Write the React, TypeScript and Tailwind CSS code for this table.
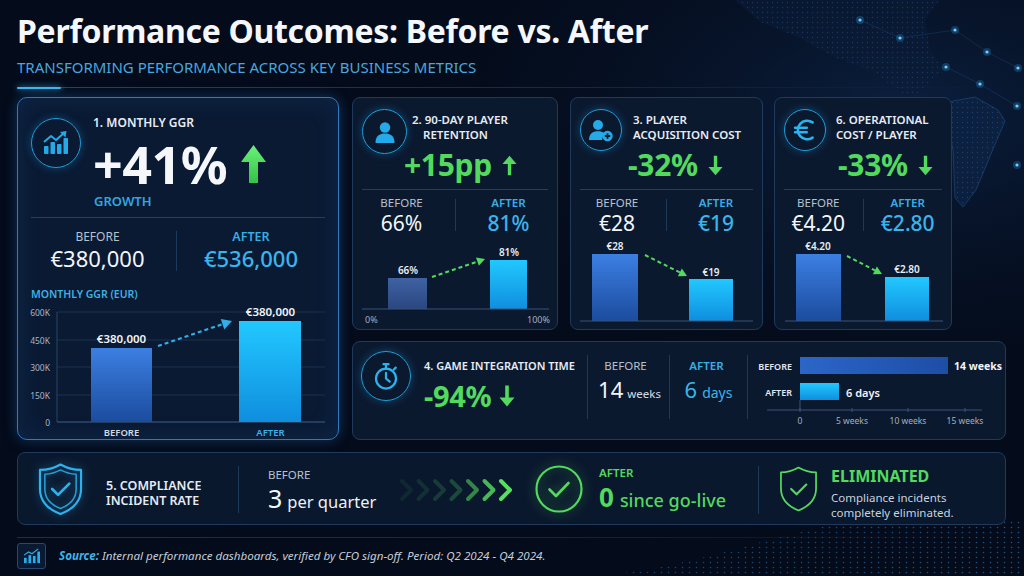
import React from 'react'

const GREEN = '#52d95e'

const NODES: [number, number][] = [
  [955, 30],
  [987, 52],
  [946, 67],
  [980, 84],
  [1018, 68],
  [1017, 106],
  [1017, 165],
  [900, 38],
  [860, 20],
]

function Backdrop() {
  return (
    <svg className="absolute inset-0" width="1024" height="576" viewBox="0 0 1024 576">
      <defs>
        <radialGradient id="bgGlow" cx="0.88" cy="0.2" r="0.55">
          <stop offset="0" stopColor="#0d2548" stopOpacity="0.8" />
          <stop offset="1" stopColor="#040b1a" stopOpacity="0" />
        </radialGradient>
        <pattern id="mapDots" width="5" height="5" patternUnits="userSpaceOnUse">
          <circle cx="2.5" cy="2.5" r="0.7" fill="#3a78c0" />
        </pattern>
        <pattern id="waveDots" width="7" height="5" patternUnits="userSpaceOnUse">
          <circle cx="3.5" cy="2.5" r="0.8" fill="#2f82c8" />
        </pattern>
        <linearGradient id="waveFade" x1="0" y1="0" x2="1" y2="0">
          <stop offset="0" stopColor="#fff" stopOpacity="0" />
          <stop offset="0.5" stopColor="#fff" stopOpacity="0.6" />
          <stop offset="1" stopColor="#fff" stopOpacity="0.9" />
        </linearGradient>
        <mask id="waveMask">
          <rect x="0" y="0" width="1024" height="576" fill="url(#waveFade)" />
        </mask>
      </defs>
      <rect width="1024" height="576" fill="url(#bgGlow)" />
      <path d="M735 0 L760 22 L800 38 L835 58 L870 70 L892 86 L906 96 L922 92 L934 80 L945 70 L930 50 L925 20 L940 0 Z" fill="#0b1d38" opacity="0.6" />
      <path d="M735 0 L760 22 L800 38 L835 58 L870 70 L892 86 L906 96 L922 92 L934 80 L945 70 L930 50 L925 20 L940 0 Z" fill="url(#mapDots)" opacity="0.3" />
      <path d="M948 102 L975 97 L998 110 L1005 121 L996 142 L986 166 L976 190 L963 207 L955 198 L953 150 L947 122 Z" fill="#0d2244" opacity="0.8" stroke="#2a5d96" strokeWidth="0.6" />
      <path d="M948 102 L975 97 L998 110 L1005 121 L996 142 L986 166 L976 190 L963 207 L955 198 L953 150 L947 122 Z" fill="url(#mapDots)" opacity="0.35" />
      <g stroke="#1f4d80" strokeWidth="0.6" opacity="0.6">
        <line x1="955" y1="30" x2="987" y2="52" />
        <line x1="987" y1="52" x2="1018" y2="68" />
        <line x1="946" y1="67" x2="980" y2="84" />
        <line x1="980" y1="84" x2="1017" y2="106" />
        <line x1="900" y1="38" x2="955" y2="30" />
        <line x1="860" y1="20" x2="900" y2="38" />
      </g>
      {NODES.map(([x, y]) => (
        <g key={`${x}-${y}`}>
          <circle cx={x} cy={y} r="4" fill="#2fa8f0" opacity="0.25" />
          <circle cx={x} cy={y} r="1.6" fill="#6fd0ff" />
        </g>
      ))}
      <g mask="url(#waveMask)">
        <path d="M600 576 C700 566 770 534 850 522 C930 510 980 536 1024 516 L1024 576 Z" fill="url(#waveDots)" opacity="0.7" />
      </g>
    </svg>
  )
}

function ThickArrow({ className }: { className?: string }) {
  return (
    <svg viewBox="0 0 25 38" className={className}>
      <defs>
        <linearGradient id="thickG" x1="0" y1="0" x2="0" y2="1">
          <stop offset="0" stopColor="#6af276" />
          <stop offset="1" stopColor="#34c24a" />
        </linearGradient>
      </defs>
      <path d="M12.5 0 L25 17 L17 17 L17 38 L8 38 L8 17 L0 17 Z" fill="url(#thickG)" />
    </svg>
  )
}

function ThinArrow({ dir, className }: { dir: 'up' | 'down'; className?: string }) {
  return (
    <svg viewBox="0 0 16 22" className={className} fill={GREEN}>
      {dir === 'up' ? (
        <path d="M8 0.5 L15.5 9.5 L9.8 9.5 L9.8 21.5 L6.2 21.5 L6.2 9.5 L0.5 9.5 Z" />
      ) : (
        <path d="M8 21.5 L15.5 12.5 L9.8 12.5 L9.8 0.5 L6.2 0.5 L6.2 12.5 L0.5 12.5 Z" />
      )}
    </svg>
  )
}

function DashArrow({ x1, y1, x2, y2, color, w = 2, head = 8 }: { x1: number; y1: number; x2: number; y2: number; color: string; w?: number; head?: number }) {
  const a = Math.atan2(y2 - y1, x2 - x1)
  const bx = x2 - Math.cos(a) * head
  const by = y2 - Math.sin(a) * head
  const hw = head * 0.55
  const px = -Math.sin(a) * hw
  const py = Math.cos(a) * hw
  return (
    <g>
      <line x1={x1} y1={y1} x2={bx} y2={by} stroke={color} strokeWidth={w} strokeDasharray="4 3" />
      <polygon points={`${x2},${y2} ${bx + px},${by + py} ${bx - px},${by - py}`} fill={color} />
    </g>
  )
}

function BarDefs() {
  return (
    <defs>
      <linearGradient id="barBefore" x1="0" y1="0" x2="0" y2="1">
        <stop offset="0" stopColor="#3c7fe2" />
        <stop offset="1" stopColor="#1b4c9e" />
      </linearGradient>
      <linearGradient id="barBeforeMuted" x1="0" y1="0" x2="0" y2="1">
        <stop offset="0" stopColor="#3f62a3" />
        <stop offset="1" stopColor="#2a4680" />
      </linearGradient>
      <linearGradient id="barAfter" x1="0" y1="0" x2="0" y2="1">
        <stop offset="0" stopColor="#22c8ff" />
        <stop offset="1" stopColor="#0f8ede" />
      </linearGradient>
      <linearGradient id="barBeforeH" x1="0" y1="0" x2="1" y2="0">
        <stop offset="0" stopColor="#2b66c8" />
        <stop offset="1" stopColor="#1d4ea6" />
      </linearGradient>
    </defs>
  )
}

function IconCircle({ className, children }: { className: string; children: React.ReactNode }) {
  return (
    <div className={`flex shrink-0 items-center justify-center rounded-full border-[1.5px] border-[#1f9dd8] shadow-[0_0_8px_rgba(30,160,230,0.35)] ${className}`}>
      {children}
    </div>
  )
}

function GrowthIcon() {
  return (
    <svg viewBox="0 0 28 24" className="h-[24px] w-[28px]" fill="#24aae8">
      <rect x="2" y="15" width="4.5" height="8" rx="0.8" />
      <rect x="8.5" y="11" width="4.5" height="12" rx="0.8" />
      <rect x="15" y="13" width="4.5" height="10" rx="0.8" />
      <rect x="21.5" y="7" width="4.5" height="16" rx="0.8" />
      <path d="M2 11 L9 5 L14 9 L22 2" fill="none" stroke="#24aae8" strokeWidth="2" strokeLinejoin="round" />
      <path d="M18 1 L24.5 0 L23.5 6.5 Z" />
    </svg>
  )
}

function UserIcon() {
  return (
    <svg viewBox="0 0 24 24" className="h-[24px] w-[24px]" fill="#24aae8">
      <circle cx="12" cy="7.5" r="5.2" />
      <path d="M2.5 23 C2.5 16 6.5 13.6 12 13.6 C17.5 13.6 21.5 16 21.5 23 Z" />
    </svg>
  )
}

function UserPlusIcon() {
  return (
    <svg viewBox="0 0 26 24" className="h-[24px] w-[26px]" fill="#24aae8">
      <circle cx="10" cy="7" r="5" />
      <path d="M1 22 C1 15.5 4.8 13.2 10 13.2 C12.5 13.2 14.5 13.7 16 14.8 L14 22 Z" />
      <circle cx="19.5" cy="18" r="5.2" />
      <path d="M19.5 15.3 V20.7 M16.8 18 H22.2" stroke="#0b192f" strokeWidth="1.8" />
    </svg>
  )
}

function EuroIcon() {
  return (
    <svg viewBox="0 0 24 24" className="h-[28px] w-[28px]" fill="none" stroke="#29b4ef" strokeWidth="2.2" strokeLinecap="round">
      <path d="M18.5 5.5 A8 8 0 1 0 18.5 18.5" />
      <path d="M3.5 10 H13.5 M3.5 14 H13.5" />
    </svg>
  )
}

function TimerIcon() {
  return (
    <svg viewBox="0 0 24 24" className="h-[30px] w-[30px]" fill="none" stroke="#29b4ef" strokeWidth="1.8" strokeLinecap="round">
      <circle cx="12" cy="14" r="8" />
      <path d="M10 2.5 H14 M12 2.5 V6" />
      <path d="M18.3 6.8 L19.8 5.3" />
      <path d="M12 9.5 V14 L15 16.5" />
    </svg>
  )
}

function ShieldDouble() {
  return (
    <svg viewBox="0 0 46 54" className="h-[54px] w-[45px]" fill="none" stroke="#2eb2ee" strokeLinejoin="round">
      <path d="M23 2 C30 6 37 7.5 44 7.5 V27 C44 40 35 48 23 52.5 C11 48 2 40 2 27 V7.5 C9 7.5 16 6 23 2 Z" strokeWidth="2.2" />
      <path d="M23 7.5 C28.5 10.5 34 11.8 39 12 V27 C39 37 32 43.5 23 47 C14 43.5 7 37 7 27 V12 C12 11.8 17.5 10.5 23 7.5 Z" strokeWidth="1.6" opacity="0.85" />
      <path d="M14.5 27 L20.5 33 L32 21.5" strokeWidth="2.8" strokeLinecap="round" />
    </svg>
  )
}

function ShieldGreen() {
  return (
    <svg viewBox="0 0 40 47" className="h-[46px] w-[39px]" fill="none" stroke={GREEN} strokeLinejoin="round">
      <path d="M20 1.5 C26 5 32 6.5 38 6.5 V23 C38 34 30 41.5 20 45.5 C10 41.5 2 34 2 23 V6.5 C8 6.5 14 5 20 1.5 Z" strokeWidth="1.8" />
      <path d="M12.5 23.5 L18 29 L28 19" strokeWidth="2.2" strokeLinecap="round" />
    </svg>
  )
}

function CheckCircle() {
  return (
    <svg viewBox="0 0 48 48" className="h-[48px] w-[48px] drop-shadow-[0_0_6px_rgba(80,220,90,0.55)]" fill="none" stroke={GREEN}>
      <circle cx="24" cy="24" r="22.5" strokeWidth="2.2" />
      <path d="M14.5 24.5 L21 31 L33.5 18" strokeWidth="2.6" strokeLinecap="round" strokeLinejoin="round" />
    </svg>
  )
}

function Chevrons() {
  const ops = [0.12, 0.18, 0.26, 0.36, 0.55, 0.8, 1]
  return (
    <svg viewBox="0 0 117 24" className="h-[24px] w-[117px]" fill="none" strokeWidth="4" strokeLinecap="round" strokeLinejoin="round">
      {ops.map((o, i) => (
        <path key={i} d={`M${4 + i * 16.5} 3 L${13 + i * 16.5} 12 L${4 + i * 16.5} 21`} stroke={i > 3 ? '#57e05f' : '#3aa25a'} opacity={o} />
      ))}
    </svg>
  )
}

function StatsIcon() {
  return (
    <svg viewBox="0 0 20 18" className="h-[16px] w-[18px]" fill="#27aee9">
      <rect x="1" y="11" width="3" height="6" />
      <rect x="6" y="8" width="3" height="9" />
      <rect x="11" y="9" width="3" height="8" />
      <rect x="16" y="4" width="3" height="13" />
      <path d="M1 8 L6 4.5 L10 6.5 L17 1" fill="none" stroke="#27aee9" strokeWidth="1.3" />
    </svg>
  )
}

function GgrCard() {
  return (
    <div className="flex h-[343px] w-[322px] shrink-0 flex-col rounded-[10px] border border-[#2d7ac2] bg-[#0a1a33] px-[13px] shadow-[0_0_14px_rgba(40,130,220,0.35),inset_0_0_24px_rgba(40,120,210,0.14)]">
      <div className="flex">
        <IconCircle className="mt-[20px] h-[50px] w-[50px]">
          <GrowthIcon />
        </IconCircle>
        <div className="ml-[12px] flex flex-col pt-[17px]">
          <div className="text-[12px] font-semibold leading-[16px] text-[#e6ecf4]">1. MONTHLY GGR</div>
          <div className="mt-[7px] flex items-center">
            <span className="text-[52px] font-bold leading-[52px] tracking-[-0.5px] text-[#f5f7fa]">+41%</span>
            <ThickArrow className="ml-[14px] h-[38px] w-[25px]" />
          </div>
          <div className="ml-[1px] mt-[3px] text-[13px] font-semibold leading-[16px] text-[#2ea8e0]">GROWTH</div>
        </div>
      </div>
      <div className="mt-[8px] h-px bg-[#22405f]" />
      <div className="mt-[11px] flex items-start">
        <div className="flex w-[145px] flex-col items-center pr-[12px]">
          <div className="text-[12px] leading-[16px] text-[#b6c1ce]">BEFORE</div>
          <div className="text-[22px] leading-[26px] text-[#f3f6fa]">€380,000</div>
        </div>
        <div className="mt-[2px] h-[40px] w-px bg-[#1e3a5a]" />
        <div className="flex flex-1 flex-col items-center">
          <div className="text-[12.5px] font-semibold leading-[16px] text-[#37aee6]">AFTER</div>
          <div className="text-[22px] font-medium leading-[26px] text-[#3ab4ec]">€536,000</div>
        </div>
      </div>
      <div className="mt-[16px] text-[10.5px] font-semibold leading-[14px] text-[#3fb0e2]">MONTHLY GGR (EUR)</div>
      <svg className="mt-[3px] overflow-visible" width="294" height="135" viewBox="0 0 294 135">
        <BarDefs />
        {[
          [8, '600K'],
          [36, '450K'],
          [63, '300K'],
          [91, '150K'],
          [118, '0'],
        ].map(([y, l]) => (
          <g key={l as string}>
            <line x1="26" y1={y as number} x2="294" y2={y as number} stroke="#1a3150" strokeWidth="1" />
            <text x="19" y={y as number} textAnchor="end" dominantBaseline="central" fontSize="8.5" fill="#a9b5c4">
              {l}
            </text>
          </g>
        ))}
        <line x1="26" y1="8" x2="26" y2="118" stroke="#2a4566" strokeWidth="1" />
        <line x1="26" y1="118" x2="294" y2="118" stroke="#3a5578" strokeWidth="1.2" />
        <rect x="60" y="44" width="61" height="74" fill="url(#barBefore)" />
        <rect x="208" y="17" width="62" height="101" fill="url(#barAfter)" />
        <text x="90.5" y="34" textAnchor="middle" dominantBaseline="central" fontSize="11.5" fontWeight="600" fill="#f1f4f8">
          €380,000
        </text>
        <text x="239.5" y="7" textAnchor="middle" dominantBaseline="central" fontSize="11.5" fontWeight="600" fill="#f1f4f8">
          €380,000
        </text>
        <DashArrow x1={127} y1={42} x2={201} y2={17} color="#31aee8" w={2.2} head={10} />
        <text x="90.5" y="128" textAnchor="middle" dominantBaseline="central" fontSize="9.5" fontWeight="600" fill="#d3dae4">
          BEFORE
        </text>
        <text x="239.5" y="128" textAnchor="middle" dominantBaseline="central" fontSize="9.5" fontWeight="600" fill="#38b2ec">
          AFTER
        </text>
      </svg>
    </div>
  )
}

type SmallCardProps = {
  box: string
  iconBox: string
  icon: React.ReactNode
  titleBox: string
  title1: string
  title2: string
  title2Box?: string
  value: string
  valueBox: string
  dir: 'up' | 'down'
  before: string
  after: string
  colPad: [string, string]
  chart: React.ReactNode
}

function SmallCard(p: SmallCardProps) {
  return (
    <div className={`flex h-[233px] shrink-0 flex-col rounded-[8px] border border-[#1f3a5b] bg-[#0b192f] ${p.box}`}>
      <div className="flex items-start pl-[9px]">
        <IconCircle className={`mt-[11px] ${p.iconBox}`}>{p.icon}</IconCircle>
        <div className={`flex flex-col pt-[14px] ${p.titleBox}`}>
          <div className="whitespace-nowrap text-[11.5px] font-semibold leading-[15px] text-[#e6ecf4]">{p.title1}</div>
          <div className={`whitespace-nowrap text-[11.5px] font-semibold leading-[15px] text-[#e6ecf4] ${p.title2Box ?? ''}`}>{p.title2}</div>
          <div className={`mt-[6px] flex items-center ${p.valueBox}`}>
            <span className="text-[30px] font-bold leading-[34px] tracking-[-0.3px] text-[#52d95e]">{p.value}</span>
            <ThinArrow dir={p.dir} className="ml-[10px] h-[21px] w-[15px]" />
          </div>
        </div>
      </div>
      <div className="mx-[9px] mt-[7px] h-px bg-[#22405f]" />
      <div className="mx-[9px] mt-[6px] flex items-start">
        <div className={`flex flex-1 flex-col items-center ${p.colPad[0]}`}>
          <div className="text-[11.5px] leading-[14px] text-[#b6c1ce]">BEFORE</div>
          <div className="text-[21px] leading-[26px] text-[#f3f6fa]">{p.before}</div>
        </div>
        <div className="mt-[3px] h-[32px] w-px bg-[#1e3a5a]" />
        <div className={`flex flex-1 flex-col items-center ${p.colPad[1]}`}>
          <div className="text-[11.5px] font-semibold leading-[14px] text-[#37aee6]">AFTER</div>
          <div className="text-[21px] font-medium leading-[26px] text-[#3ab4ec]">{p.after}</div>
        </div>
      </div>
      {p.chart}
    </div>
  )
}

function BarLabel({ x, y, t }: { x: number; y: number; t: string }) {
  return (
    <text x={x} y={y} textAnchor="middle" dominantBaseline="central" fontSize="10" fontWeight="600" fill="#e8edf3">
      {t}
    </text>
  )
}

function IntegrationCard() {
  return (
    <div className="flex h-[99px] w-[654px] items-start rounded-[8px] border border-[#1f3a5b] bg-[#0b192f]">
      <div className="flex w-[234px] shrink-0 items-start pl-[8px]">
        <IconCircle className="mt-[9px] h-[50px] w-[50px]">
          <TimerIcon />
        </IconCircle>
        <div className="ml-[13px] flex flex-col pt-[16px]">
          <div className="whitespace-nowrap text-[11px] font-semibold leading-[16px] text-[#e6ecf4]">4. GAME INTEGRATION TIME</div>
          <div className="mt-[5px] flex items-center">
            <span className="text-[29px] font-bold leading-[34px] tracking-[-0.3px] text-[#52d95e]">-94%</span>
            <ThinArrow dir="down" className="ml-[8px] h-[22px] w-[16px]" />
          </div>
        </div>
      </div>
      <div className="mt-[13px] h-[64px] w-px bg-[#1e3a5a]" />
      <div className="flex w-[81px] flex-col items-center pt-[17px]">
        <div className="pr-[6px] text-[11.5px] leading-[14px] text-[#b6c1ce]">BEFORE</div>
        <div className="mt-[2px] flex items-baseline pl-[2px]">
          <span className="text-[22px] leading-[28px] text-[#f3f6fa]">14</span>
          <span className="ml-[4px] text-[11.5px] text-[#d6dde6]">weeks</span>
        </div>
      </div>
      <div className="mt-[13px] h-[64px] w-px bg-[#1e3a5a]" />
      <div className="flex w-[77px] flex-col items-center pt-[17px]">
        <div className="pr-[4px] text-[11.5px] font-semibold leading-[14px] text-[#37aee6]">AFTER</div>
        <div className="mt-[2px] flex items-baseline">
          <span className="text-[22px] leading-[28px] text-[#3ab4ec]">6</span>
          <span className="ml-[5px] text-[14px] text-[#3ab4ec]">days</span>
        </div>
      </div>
      <div className="mt-[13px] h-[64px] w-px bg-[#1e3a5a]" />
      <svg width="257" height="96" viewBox="0 0 257 96">
        <BarDefs />
        <text x="44" y="24" textAnchor="end" dominantBaseline="central" fontSize="9" fontWeight="600" fill="#e3e8ef">
          BEFORE
        </text>
        <text x="44" y="50" textAnchor="end" dominantBaseline="central" fontSize="9" fontWeight="600" fill="#e3e8ef">
          AFTER
        </text>
        <rect x="52" y="15" width="148" height="17" fill="url(#barBeforeH)" />
        <rect x="52" y="41" width="39" height="17" fill="url(#barAfter)" />
        <text x="206" y="24" dominantBaseline="central" fontSize="10.5" fontWeight="700" fill="#f1f4f8">
          14 weeks
        </text>
        <text x="98" y="50" dominantBaseline="central" fontSize="11" fontWeight="600" fill="#f1f4f8">
          6 days
        </text>
        <line x1="52" y1="58" x2="52" y2="68" stroke="#3a5578" strokeWidth="1" />
        <line x1="19" y1="68" x2="234" y2="68" stroke="#3a5578" strokeWidth="1" />
        {[
          [52, '0'],
          [104, '5 weeks'],
          [160, '10 weeks'],
          [217, '15 weeks'],
        ].map(([x, l]) => (
          <g key={l as string}>
            <line x1={x as number} y1="66" x2={x as number} y2="70" stroke="#3a5578" strokeWidth="1" />
            <text x={x as number} y="78" textAnchor="middle" dominantBaseline="central" fontSize="8.5" fill="#a4afbe">
              {l}
            </text>
          </g>
        ))}
      </svg>
    </div>
  )
}

function ComplianceCard() {
  return (
    <div className="mt-[12px] flex h-[73px] w-[989px] items-start rounded-[8px] border border-[#1f3a5b] bg-[#0a182d] pl-[20px]">
      <div className="mt-[9px] drop-shadow-[0_0_5px_rgba(40,170,240,0.5)]">
        <ShieldDouble />
      </div>
      <div className="ml-[23px] mt-[25px] w-[132px] text-[12.5px] font-semibold leading-[15px] text-[#e6ecf4]">
        <div>5. COMPLIANCE</div>
        <div>INCIDENT RATE</div>
      </div>
      <div className="mt-[13px] h-[47px] w-px bg-[#1e3a5a]" />
      <div className="ml-[29px] mt-[15px] flex w-[130px] flex-col">
        <div className="text-[11.5px] leading-[14px] text-[#b6c1ce]">BEFORE</div>
        <div className="mt-[1px] flex items-baseline">
          <span className="text-[25px] leading-[30px] text-[#f3f6fa]">3</span>
          <span className="ml-[5px] text-[16.5px] text-[#eef2f7]">per quarter</span>
        </div>
      </div>
      <div className="mt-[25px]">
        <Chevrons />
      </div>
      <div className="ml-[20px] mt-[12px]">
        <CheckCircle />
      </div>
      <div className="ml-[16px] mt-[13px] flex w-[159px] flex-col">
        <div className="text-[11.5px] font-semibold leading-[14px] text-[#52d95e]">AFTER</div>
        <div className="mt-[2px] flex items-baseline">
          <span className="text-[26px] font-bold leading-[30px] text-[#52d95e]">0</span>
          <span className="ml-[6px] text-[18px] font-medium text-[#52d95e]">since go-live</span>
        </div>
      </div>
      <div className="mt-[13px] h-[48px] w-px bg-[#1e3a5a]" />
      <div className="ml-[20px] mt-[13px]">
        <ShieldGreen />
      </div>
      <div className="ml-[13px] mt-[13px] flex flex-col">
        <div className="text-[16px] font-bold leading-[20px] text-[#52d95e]">ELIMINATED</div>
        <div className="mt-[4px] text-[11.5px] leading-[15px] text-[#c9d2de]">
          <div>Compliance incidents</div>
          <div>completely eliminated.</div>
        </div>
      </div>
    </div>
  )
}

export default function App() {
  return (
    <div className="relative h-[576px] w-[1024px] overflow-hidden bg-[#040b1a] font-['Noto_Sans','Open_Sans',sans-serif] text-white">
      <Backdrop />
      <div className="relative flex flex-col pl-[17px] pt-[9px]">
        <h1 className="text-[32px] font-bold leading-[44px] tracking-[-0.3px] text-[#f4f7fb]">Performance Outcomes: Before vs. After</h1>
        <p className="mt-[5px] text-[15px] leading-[18px] text-[#4aa6de]">TRANSFORMING PERFORMANCE ACROSS KEY BUSINESS METRICS</p>
        <div className="mt-[11px] h-px w-[990px] bg-[linear-gradient(90deg,#1d4470,#0f2846_60%,transparent)]">
          <div className="-mt-[0.5px] h-[2px] w-[44px] rounded-full bg-[#3fb8f0] shadow-[0_0_6px_#3fb8f0]" />
        </div>
        <div className="mt-[9px] flex h-[343px] gap-[13px]">
          <GgrCard />
          <div className="flex w-[654px] flex-col gap-[11px]">
            <div className="flex">
              <SmallCard
                box="w-[206px]"
                iconBox="h-[45px] w-[45px]"
                icon={<UserIcon />}
                titleBox="ml-[5px]"
                title1="2. 90-DAY PLAYER"
                title2="RETENTION"
                title2Box="pl-[11px]"
                value="+15pp"
                valueBox="-ml-[8px]"
                dir="up"
                before="66%"
                after="81%"
                colPad={['pr-[14px]', 'pl-[13px]']}
                chart={
                  <svg width="204" height="93" viewBox="0 0 204 93">
                    <BarDefs />
                    <rect x="35" y="42" width="39" height="31" fill="url(#barBeforeMuted)" />
                    <rect x="137" y="24" width="37" height="49" fill="url(#barAfter)" />
                    <line x1="9" y1="73" x2="196" y2="73" stroke="#3a5578" strokeWidth="1.2" />
                    <BarLabel x={55} y={34} t="66%" />
                    <BarLabel x={156} y={16} t="81%" />
                    <DashArrow x1={79} y1={41} x2={132} y2={23} color={GREEN} />
                    <text x="12" y="83" dominantBaseline="central" fontSize="9" fill="#a4afbe">
                      0%
                    </text>
                    <text x="197" y="83" textAnchor="end" dominantBaseline="central" fontSize="9" fill="#a4afbe">
                      100%
                    </text>
                  </svg>
                }
              />
              <SmallCard
                box="ml-[12px] w-[193px]"
                iconBox="h-[42px] w-[42px]"
                icon={<UserPlusIcon />}
                titleBox="ml-[11px]"
                title1="3. PLAYER"
                title2="ACQUISITION COST"
                value="-32%"
                valueBox="-ml-[5px]"
                dir="down"
                before="€28"
                after="€19"
                colPad={['pr-[12px]', 'pl-[12px]']}
                chart={
                  <svg width="191" height="93" viewBox="0 0 191 93">
                    <BarDefs />
                    <rect x="21" y="18" width="46" height="67" fill="url(#barBefore)" />
                    <rect x="118" y="43" width="44" height="42" fill="url(#barAfter)" />
                    <line x1="9" y1="85" x2="182" y2="85" stroke="#3a5578" strokeWidth="1.2" />
                    <BarLabel x={44} y={10} t="€28" />
                    <BarLabel x={140} y={36} t="€19" />
                    <DashArrow x1={74} y1={19} x2={116} y2={40} color={GREEN} />
                  </svg>
                }
              />
              <SmallCard
                box="ml-[11px] w-[178px]"
                iconBox="h-[42px] w-[42px]"
                icon={<EuroIcon />}
                titleBox="ml-[10px]"
                title1="6. OPERATIONAL"
                title2="COST / PLAYER"
                value="-33%"
                valueBox="ml-[2px]"
                dir="down"
                before="€4.20"
                after="€2.80"
                colPad={['pr-[10px]', 'pl-[10px]']}
                chart={
                  <svg width="176" height="93" viewBox="0 0 176 93">
                    <BarDefs />
                    <rect x="21" y="18" width="45" height="67" fill="url(#barBefore)" />
                    <rect x="110" y="41" width="44" height="44" fill="url(#barAfter)" />
                    <line x1="10" y1="85" x2="168" y2="85" stroke="#3a5578" strokeWidth="1.2" />
                    <BarLabel x={43} y={10} t="€4.20" />
                    <BarLabel x={132} y={33} t="€2.80" />
                    <DashArrow x1={72} y1={20} x2={107} y2={38} color={GREEN} />
                  </svg>
                }
              />
            </div>
            <IntegrationCard />
          </div>
        </div>
        <ComplianceCard />
        <div className="mt-[12px] h-px w-[990px] bg-[linear-gradient(90deg,#173456,#10294a_50%,transparent)]" />
        <div className="mt-[5px] flex items-center">
          <div className="flex h-[26px] w-[29px] items-center justify-center rounded-[3px] border border-[#244a74] bg-[#0a1a33]">
            <StatsIcon />
          </div>
          <p className="ml-[13px] text-[11.6px] italic text-[#c4ccd8]">
            <span className="font-bold text-[#3fb4ea]">Source:</span> Internal performance dashboards, verified by CFO sign-off. Period: Q2 2024 - Q4 2024.
          </p>
        </div>
      </div>
    </div>
  )
}
